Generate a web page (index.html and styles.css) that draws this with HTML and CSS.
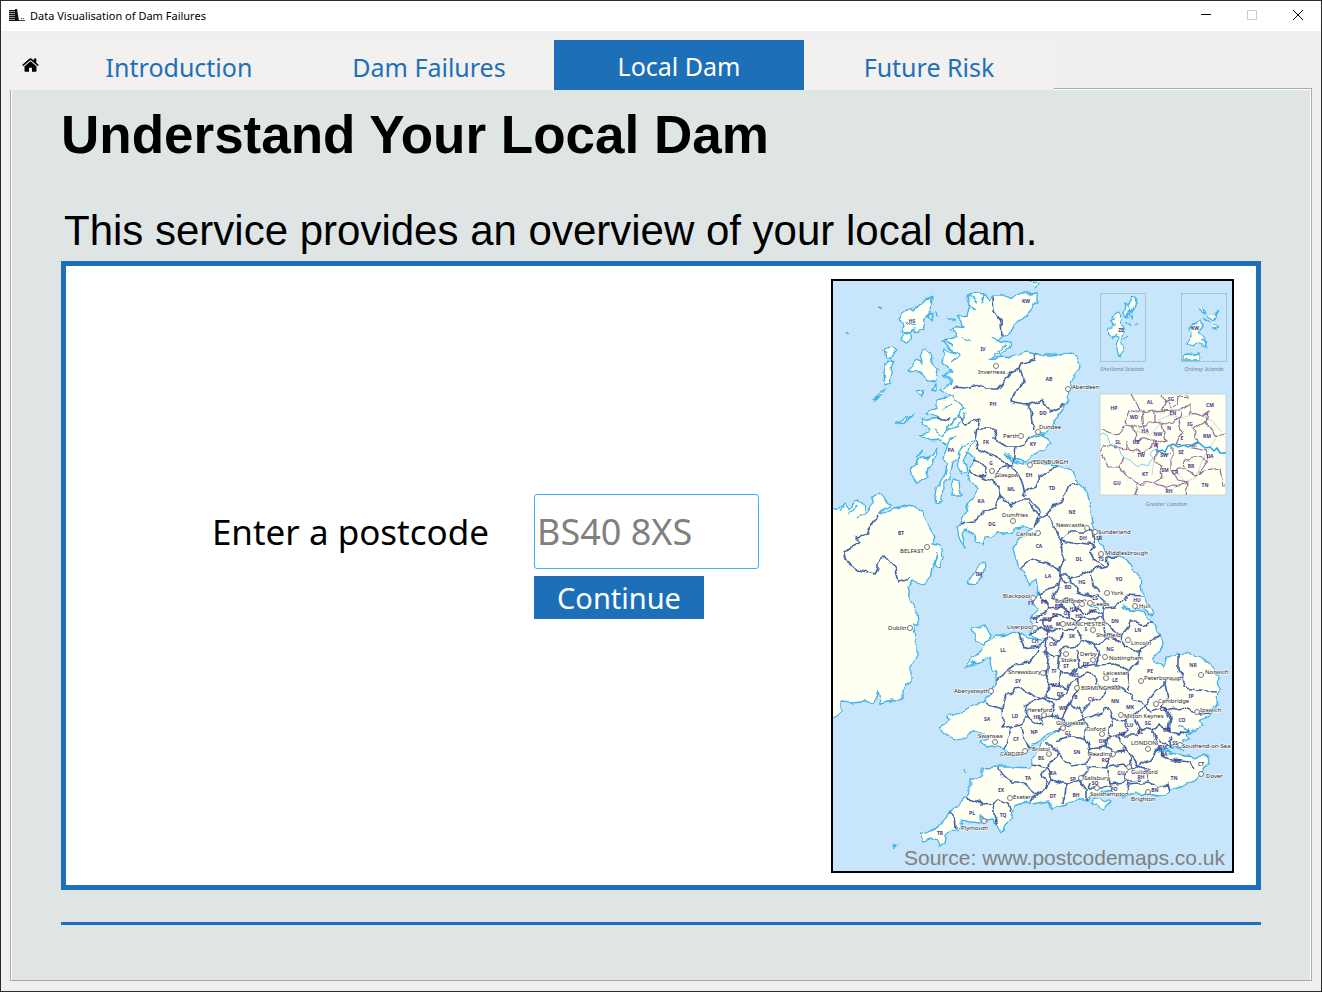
FILE: index.html
```
<!DOCTYPE html>
<html lang="en">
<head>
<meta charset="utf-8">
<title>Data Visualisation of Dam Failures</title>
<link rel="stylesheet" href="styles.css">
</head>
<body>
<div class="window">
  <header class="titlebar">
    <svg class="app-icon" viewBox="0 0 16 13" aria-hidden="true">
      <path fill="#999" d="M0 1h6v11H0z"/>
      <path stroke="#111" stroke-width="1" d="M0 1.500h6M0 3.500h6M0 5.500h6M0 7.500h6M0 9.500h6M0 11.500h6"/>
      <path fill="#111" d="M6 0h2l2 12H6z"/>
      <path stroke="#444" d="M10 11.500h6M12 9.500h1M14 9.500h1"/>
    </svg>
    <span class="app-name">Data Visualisation of Dam Failures</span>
    <div class="window-controls">
      <button type="button" aria-label="Minimise"><svg viewBox="0 0 10 10"><path d="M0 4.500h10" stroke="#000"/></svg></button>
      <button type="button" aria-label="Maximise" disabled><svg viewBox="0 0 10 10"><path d="M.5.500h9v9h-9z" fill="none" stroke="#ccc"/></svg></button>
      <button type="button" aria-label="Close"><svg viewBox="0 0 10 10"><path d="M0 0l10 10M10 0L0 10" stroke="#000"/></svg></button>
    </div>
  </header>

  <div class="workspace">
    <nav class="tabs">
      <a class="tab tab-home" href="#home" aria-label="Home">
        <svg viewBox="0 0 17 14"><path d="M8.500 3.200L2.500 8.200V13q0 .7.700.7H7V9.800h3v3.900h3.800q.7 0 .7-.7V8.200z"/><path d="M8.500.300q-.5 0-.9.300L.4 6.700q-.3.300 0 .5l.5.600q.3.200.6 0L8.500 2.100l7 5.700q.3.200.6 0l.5-.6q.3-.2 0-.5L14.300 4.700V.700q0-.3-.3-.3h-1.900q-.3 0-.3.300v1.800L9.400.600Q9 .300 8.500.300z"/></svg>
      </a>
      <a class="tab" href="#introduction">Introduction</a>
      <a class="tab" href="#failures">Dam Failures</a>
      <a class="tab tab-active" href="#local" aria-current="page">Local Dam</a>
      <a class="tab" href="#risk">Future Risk</a>
    </nav>

    <main class="panel">
      <h1 class="title">Understand Your Local Dam</h1>
      <p class="lead">This service provides an overview of your local dam.</p>

      <section class="card">
        <form class="search">
          <label class="search-label" for="postcode">Enter a postcode</label>
          <input class="search-input" id="postcode" type="text" placeholder="BS40 8XS">
          <button class="search-button" type="button">Continue</button>
        </form>

        <figure class="map">
          <svg class="map-drawing" viewBox="833 281 399 590" preserveAspectRatio="xMidYMid slice" role="img" aria-label="UK postcode areas">
            <defs>
              <filter id="rough" x="0" y="0" width="1" height="1" color-interpolation-filters="sRGB">
                <feTurbulence type="fractalNoise" baseFrequency="0.13" numOctaves="1" seed="4" result="n"/>
                <feDisplacementMap in="SourceGraphic" in2="n" scale="8" xChannelSelector="R" yChannelSelector="G"/>
              </filter>
            </defs>
            <g filter="url(#rough)">
              <rect class="sea" x="813" y="261" width="439" height="630"/>
              <g class="land">
                <path d="M972 292L978 293 984 294 988 300 993 297 1005 297 1013 297 1020 293 1030 293 1037 292V300L1033 309 1028 314 1018 321 1010 330 1002 337 998 341 992 337 1000 342 1011 343 1007 350 995 355 990 359 1004 357 1010 358 1017 355 1025 352 1037 354 1050 354 1063 355 1070 353 1077 357 1080 364 1079 370 1073 379 1069 390 1068 400 1064 408 1058 416 1054 422 1050 430 1045 434 1036 434 1030 438 1043 435 1047 439 1051 444 1045 449 1037 452 1030 457 1024 461 1014 459 1005 453 1012 461 1022 464 1035 462 1045 464 1058 465 1068 468 1075 477 1080 483 1085 488 1088 500 1090 512 1093 525 1097 533 1102 545 1104 552 1108 557 1118 556 1127 560 1133 568 1140 577 1144 581 1141 586 1143 595 1148 605 1153 615 1148 613 1142 608 1133 610 1122 607 1136 612 1145 614 1152 622 1158 630 1162 638 1163 645 1158 652 1152 660 1158 663 1164 667 1168 657 1177 654 1190 654 1203 658 1213 668 1219 678 1218 688 1217 702 1213 712 1207 717 1200 720 1203 727 1193 730 1187 734 1190 739 1182 740 1180 745 1173 749 1155 750 1170 753 1180 755 1193 757 1210 755 1208 765 1202 772 1195 780 1187 785 1177 787 1168 793 1160 796 1143 793 1130 794 1122 798 1112 792 1103 791 1095 795 1087 800 1077 800 1070 804 1062 806 1053 809 1048 801 1040 803 1030 802 1020 803 1013 808 1012 818 1005 825 1002 832 997 828 993 820 986 821 982 816 982 823 970 822 963 820 958 828 947 833 945 842 940 846 937 840 930 838 923 840 920 835 927 832 937 828 945 820 950 812 957 805 965 798 970 790V780L977 780 983 775V768L997 767 1013 767 1030 768 1033 758 1037 752 1043 742 1057 730 1044 736 1035 745 1030 748 1023 755 1013 756 1003 750 997 745 987 747 982 742 989 738 980 732 970 732 965 738 955 741 950 736 942 732 940 727 948 722 947 717 960 713 970 707 983 702 992 693 995 682 997 672 992 672 990 662 992 657 980 662 972 663 965 668 970 660 980 652 983 645 995 637 1007 635 1020 632 1028 638 1040 641 1032 634 1031 627 1032 617 1037 610 1033 602 1038 592 1036 578 1030 585 1025 575 1020 567 1015 557 1013 548 1022 537 1033 528 1024 527 1015 528 1013 533 997 533 990 538 985 537 983 545 975 538 967 530 962 533 965 547 960 540 956 527 962 522 967 508 973 498 977 490 968 475 974 458 968 452 964 460 967 472 962 475 958 467 957 458 953 462 950 475 943 485 942 500 935 502 937 488 945 475 947 465 943 458 948 445 940 439 928 440 918 435 930 430 927 428 920 420 940 417 925 412 937 407V400L952 397 940 390 953 382 945 375 953 370 942 363 945 350 955 354 943 340 958 337 952 328 963 325 957 317 967 315 970 305 968 297Z"/>
                <path d="M828 510L838 509 845 503 850 509 857 500 863 505 865 512 870 507 872 497 880 495 892 505 885 508 879 515 894 508 907 506 917 507 923 512 928 525 935 537 932 543 942 545 944 557 940 568 935 565 937 553 932 568 930 578 923 585 914 582 908 588 912 602 917 612 918 625 913 625 917 640V655L910 668V680L903 690V700L893 700 880 703 878 690 875 702 863 702 850 703 842 702V712L832 720H820V510Z"/>
                <path d="M931 297L924 301 912 311 906 311 899 318 903 325 901 332 910 334 914 330 916 333 923 329 925 321 930 314ZM904 334L911 336 907 343 901 340ZM884 350L893 347 898 351 892 356 886 356ZM887 360L894 362 890 372 891 383 885 385 884 372ZM886 388L878 397 874 402 880 391Z"/>
                <path d="M924 349L930 352 931 362 938 370 936 380 928 382 921 372 909 370 915 360 922 362 920 355ZM917 391L923 390 922 396ZM897 424L914 413 905 423ZM936 383L931 390 936 391ZM929 315L933 313 931 319Z"/>
                <path d="M911 468L920 458 928 460 938 448 935 458 929 468 927 478 917 484 913 476ZM918 456L924 449 920 452ZM952 478L959 480 960 494 953 494 950 487ZM984 562L985 571 975 585 968 584 973 573ZM972 629L985 625 991 636 984 645 976 642ZM1090 802L1099 797 1110 802 1103 809ZM893 845L898 844 894 848Z"/>
                <path d="M846 332L849 334M879 308L883 309M965 768L966 771M1030 281L1040 283 1035 288"/>
              </g>
              <g class="inlet">
                <path d="M954 351L960 355 951 362M945 340L953 346M970 305L977 310M968 297L977 301M984 294L982 304M952 397L965 407 955 418 947 430M955 420L943 435 935 430M965 413L958 426 945 432M945 445L955 436M1004 357L997 351 1007 345M957 458L963 445 971 441M1087 605L1098 608M974 441L970 450M858 507L848 515M865 512L857 518M845 503L840 511M1172 745L1183 751M1190 732L1180 727M918 435L926 434M943 375L952 384M936 310L937 318M890 356L893 364M905 322L915 326M948 318L956 322M962 337L970 341M943 410L950 404"/>
              </g>
              <g class="border">
                <path d="M993 298L994 312 1001 322 1002 336M954 387L965 388 980 385 985 389 997 389 1003 382 1012 372 1020 368 1022 363 1035 360 1037 354M1020 368L1023 378 1022 385 1011 397 1010 402 1025 405 1043 400 1050 412 1065 405M1027 403L1031 412 1032 422 1035 430M937 418L948 420M958 416L965 424 980 420 977 428 997 428 993 438 1007 447 1017 447 1025 445 1030 435"/>
                <path d="M977 428L975 440 978 448 988 453 1000 458 1008 468 1013 465 1015 447M969 470L975 475 985 476 987 468 980 462 972 460M975 475L990 480 997 485 1000 495M995 480L1000 468 1010 466 1018 475 1023 485 1025 497M1025 492L1035 487 1040 475 1050 470 1058 465M961 524L975 522 985 512 995 508 1000 495 1012 506 1020 500 1030 500 1040 510 1038 520 1034 525"/>
                <path d="M1078 484L1068 487 1063 500 1052 507 1047 515 1042 518 1035 510 1028 502M1042 518L1034 526M1047 515L1053 525 1060 540 1068 532 1085 532 1092 530 1095 545 1080 543 1061 540 1062 552 1065 560 1060 568 1060 575 1075 578 1085 573 1098 568 1106 566 1107 558 1118 556M1095 545L1090 550 1093 560 1106 566M1020 568L1030 559 1045 562 1060 570"/>
                <path d="M1060 575L1058 585 1038 593M1060 575L1063 581 1073 583 1078 592 1090 596 1098 594 1104 600 1103 608 1115 607 1118 603 1125 600 1128 595 1142 596M1072 578L1073 583M1090 574L1093 585 1100 592M1103 608L1103 620 1110 628 1120 636 1128 630 1130 620 1145 625 1153 622M1162 636L1150 640 1145 647 1138 652 1125 648 1120 636M1140 650L1138 662 1127 672 1129 690"/>
                <path d="M1038 593L1045 600 1050 608 1045 614 1032 618M1058 585L1052 598 1060 602 1072 598 1078 603 1085 600M1050 608L1062 606 1070 612 1068 618 1058 614 1050 620 1040 620M1070 612L1078 608 1082 614 1092 612 1103 612M1068 618L1076 622 1085 618 1095 620 1103 616M1042 620L1044 628 1052 631 1062 628 1072 630 1078 622M1030 634L1040 628 1050 632 1048 640 1040 638M1060 600L1062 608M1073 600L1077 612"/>
                <path d="M1020 632L1024 648 1040 646 1046 638 1060 640 1064 632M1046 638L1045 650 1053 658 1060 656 1062 648 1078 646 1082 640 1078 630M1082 640L1095 645 1110 637 1120 640M1095 645L1100 655 1096 665 1080 668 1078 650M1060 656L1058 670 1070 675 1078 668M1096 665L1115 664 1128 670M1104 628L1106 638M995 682L1005 672 1016 664 1030 662 1040 648"/>
                <path d="M1045 650L1048 660 1046 675 1050 684 1060 686 1068 690 1070 682 1080 678 1085 672 1095 674 1096 684 1106 690 1115 686 1128 692 1133 700 1145 705 1155 692 1165 684 1167 678 1180 680M1178 654L1178 670 1185 680 1184 688 1200 690 1216 692M1050 684L1046 696 1056 700 1064 696 1068 690M1060 670L1058 686M1080 678L1078 690 1070 702 1080 712 1090 702 1100 700 1106 690M1165 684L1168 698 1160 706 1170 710 1182 708 1200 714 1210 713"/>
                <path d="M985 702L992 706 1003 709 1006 694 1022 688 1034 696 1044 698 1030 702 1024 706 1028 718 1040 725M1003 709L1004 720 1000 728 1012 726 1010 735 1004 750M1012 726L1022 724 1028 718M1022 726L1024 740 1030 748M1044 698L1054 704 1052 716 1040 718 1042 726M1052 716L1062 718 1070 702M1062 718L1066 726 1084 720 1102 714 1106 706M1066 726L1056 732M1080 712L1086 724 1084 740"/>
                <path d="M1106 706L1112 720 1108 734 1120 736 1128 728 1124 720 1134 716 1145 705 1150 712 1164 708M1124 720L1110 718M1134 716L1140 728 1136 736 1120 736M1140 728L1152 730 1158 724 1168 730 1170 718 1166 710M1168 730L1180 736 1188 730M1152 730L1158 748 1150 760 1132 768 1128 752 1122 742 1116 736M1158 748L1164 756 1172 760 1190 762 1194 768M1158 740L1166 742 1172 750M1170 736L1172 748"/>
                <path d="M1056 740L1070 736 1086 740 1090 748 1088 764 1070 766 1058 752 1050 744 1045 744M1090 748L1106 746 1108 736M1106 746L1112 754 1124 752M1112 754L1106 768 1088 766M1106 768L1124 764 1128 770 1124 782 1110 784 1108 770M1058 752L1048 768 1032 764M1048 768L1052 780 1066 784 1080 780 1090 768M1128 752L1138 766 1148 770 1150 782 1128 784 1126 794M1150 782L1158 788 1168 784 1170 792"/>
                <path d="M998 768L1000 774 1012 782 1022 782 1036 794 1048 786 1042 774 1048 768M1036 794L1030 801M1052 780L1048 788M1066 784L1062 804M1080 780L1086 790 1086 800M1090 782L1088 788 1104 788 1112 786M1124 782L1140 780M965 799L974 800 982 804 994 803 998 800 1008 804 1011 810M994 803L996 824M950 812L954 816 955 828"/>
                <path d="M878 515L872 525 865 535 855 537 860 542 843 551 848 563 862 572 875 575 880 562 885 557 895 568 898 582 912 579"/>
              </g>
            </g>

            <g class="inset-sea">
              <rect x="1100.500" y="293.500" width="45" height="68"/>
              <rect x="1181.500" y="293.500" width="45" height="68"/>
            </g>
            <g class="land island" filter="url(#rough)">
              <path d="M1133 296L1137 298 1134 307 1130 312 1128 306ZM1126 304L1129 308 1127 317 1123 314ZM1117 311L1121 318 1119 325 1125 328 1121 335 1123 346 1120 358 1117 350 1118 337 1108 334 1107 329 1114 326 1112 317ZM1129 314L1134 308 1132 318ZM1136 324L1138 323M1125 322L1132 327M1110 320L1115 318M1113 338L1117 333M1124 340L1128 335"/>
              <path d="M1192 324L1200 320 1204 325 1198 333 1204 338 1206 346 1200 343 1194 347 1188 342 1191 333 1188 328ZM1182 356L1199 353 1199 361 1182 361ZM1199 309L1205 313 1203 308M1207 316L1213 320 1221 309 1215 315M1214 325L1218 328 1213 330M1204 317L1211 323M1202 340L1208 344"/>
            </g>

            <g class="london">
              <rect x="1100" y="394" width="126" height="101"/>
              <path class="london-road" d="M1158 420L1170 415 1182 418 1196 413 1212 421 1222 432M1160 424L1150 435 1132 430M1216 438L1205 455 1195 478 1185 482 1176 470M1152 475L1154 460 1160 450"/>
              <path class="london-border" filter="url(#rough)" d="M1132 394L1138 405 1140 413 1162 410 1165 400 1173 408 1180 397 1190 396M1165 400L1163 394M1140 413L1128 410 1124 420 1128 425 1118 435 1108 432 1100 429M1128 425L1140 428 1155 422 1155 411 1180 410 1190 404 1190 413 1204 416 1208 413 1206 422 1216 436 1226 434M1155 422L1165 424 1178 420 1180 412M1178 420L1182 432 1176 444 1190 446 1198 444 1194 430 1206 422M1132 425L1136 440 1150 438 1155 443 1166 440 1162 424M1128 440L1128 450 1142 452 1155 443M1128 450L1110 445 1100 450M1155 443L1160 452 1172 455 1172 444M1172 455L1172 470 1185 468 1184 459 1200 458 1207 462 1206 450 1190 446M1119 467L1130 480 1136 484 1152 482 1162 478 1160 464 1155 462 1156 452M1172 470L1178 480 1188 482 1186 495M1152 482L1168 488 1188 482M1136 484L1137 495M1207 462L1200 472 1220 468 1223 486 1226 486M1102 453L1108 467 1119 467 1124 458M1185 468L1194 476 1204 472M1142 410L1144 430"/>
              <path class="thames-west" d="M1100 435L1103 433 1107 435 1109 441 1111 446 1115 445 1119 448 1121 454 1125 458 1130 460 1134 464 1138 467 1142 464 1148 466 1150 462 1153 458 1150 454 1153 450 1158 450"/>
              <path class="thames" d="M1156 449L1158 452 1162 450 1165 452 1168 446 1173 444 1178 447 1184 445 1188 447 1194 444 1198 442 1205 448 1210 447 1214 451 1217 448 1220 453 1226 453"/>
            </g>

            <g class="area">
              <text x="912" y="323">HS</text><text x="1026" y="303">KW</text><text x="983" y="351">IV</text><text x="993" y="406">PH</text><text x="1049" y="381">AB</text><text x="1043" y="415">DD</text><text x="951" y="452">PA</text><text x="986" y="444">FK</text><text x="1033" y="446">KY</text><text x="991" y="465">G</text><text x="1029" y="477">EH</text><text x="1011" y="491">ML</text><text x="981" y="503">KA</text><text x="992" y="526">DG</text><text x="1052" y="490">TD</text><text x="1072" y="514">NE</text><text x="1083" y="540">DH</text><text x="1099" y="540">SR</text><text x="1039" y="548">CA</text><text x="1079" y="561">DL</text><text x="1101" y="561">TS</text><text x="901" y="535">BT</text><text x="979" y="576">IM</text>
              <text x="1048" y="578">LA</text><text x="1082" y="584">HG</text><text x="1119" y="581">YO</text><text x="1068" y="589">BD</text><text x="1044" y="604">PR</text><text x="1058" y="608">BB</text><text x="1095" y="600">LS</text><text x="1073" y="611">HX</text><text x="1093" y="613">WF</text><text x="1137" y="602">HU</text><text x="1031" y="605">FY</text><text x="1055" y="617">BL</text><text x="1067" y="615">OL</text><text x="1079" y="618">HD</text><text x="1037" y="623">L</text><text x="1047" y="621">WN</text><text x="1049" y="629">WA</text><text x="1058" y="626">M</text><text x="1086" y="631">S</text><text x="1115" y="623">DN</text><text x="1138" y="632">LN</text><text x="1072" y="638">SK</text><text x="1035" y="643">CH</text><text x="1053" y="646">CW</text><text x="1110" y="651">NG</text><text x="1086" y="666">DE</text><text x="1066" y="668">ST</text><text x="1003" y="652">LL</text><text x="1054" y="673">TF</text><text x="1075" y="677">WS</text><text x="1115" y="682">LE</text><text x="1150" y="673">PE</text><text x="1193" y="667">NR</text><text x="1018" y="683">SY</text><text x="1055" y="687">WV</text><text x="1060" y="696">DY</text><text x="1076" y="699">B</text><text x="1091" y="701">CV</text><text x="1115" y="703">NN</text><text x="1130" y="709">MK</text><text x="1163" y="711">CB</text><text x="1191" y="698">IP</text><text x="1182" y="722">CO</text><text x="987" y="721">SA</text><text x="1015" y="718">LD</text><text x="1037" y="719">HR</text><text x="1063" y="710">WR</text><text x="1034" y="734">NP</text><text x="1068" y="735">GL</text><text x="1016" y="741">CF</text><text x="1130" y="727">LU</text><text x="1148" y="725">SG</text><text x="1122" y="736">HP</text><text x="1140" y="734">AL</text><text x="1167" y="732">CM</text><text x="1102" y="743">OX</text><text x="1077" y="754">SN</text><text x="1041" y="760">BS</text><text x="1105" y="762">RG</text><text x="1125" y="751">SL</text><text x="1175" y="745">SS</text><text x="1163" y="749">RM</text><text x="1164" y="756">DA</text><text x="1177" y="763">ME</text><text x="1201" y="766">CT</text><text x="1053" y="775">BA</text><text x="1028" y="780">TA</text><text x="1001" y="792">EX</text><text x="1073" y="781">SP</text><text x="1121" y="775">GU</text><text x="1141" y="779">RH</text><text x="1174" y="780">TN</text><text x="1095" y="785">SO</text><text x="1114" y="791">PO</text><text x="1155" y="792">BN</text><text x="1053" y="798">DT</text><text x="1076" y="797">BH</text><text x="972" y="815">PL</text><text x="1003" y="817">TQ</text><text x="940" y="835">TR</text><text x="1121" y="332">ZE</text><text x="1195" y="330">KW</text>
              <text x="1114" y="410">HP</text><text x="1150" y="404">AL</text><text x="1171" y="401">SG</text><text x="1210" y="407">CM</text><text x="1134" y="419">WD</text><text x="1173" y="415">EN</text><text x="1190" y="426">IG</text><text x="1145" y="433">HA</text><text x="1158" y="436">NW</text><text x="1169" y="430">N</text><text x="1182" y="440">E</text><text x="1207" y="438">RM</text><text x="1118" y="444">SL</text><text x="1136" y="444">UB</text><text x="1156" y="447">W</text><text x="1141" y="457">TW</text><text x="1164" y="457">SW</text><text x="1181" y="454">SE</text><text x="1210" y="458">DA</text><text x="1191" y="468">BR</text><text x="1165" y="472">SM</text><text x="1175" y="474">CR</text><text x="1145" y="476">KT</text><text x="1117" y="485">GU</text><text x="1205" y="487">TN</text><text x="1169" y="493">RH</text>
            </g>

            <g class="dot">
              <circle cx="996" cy="366" r="2.500"/><circle cx="1068" cy="389" r="2.500"/><circle cx="1038" cy="432" r="2.500"/><circle cx="1021" cy="436" r="2.500"/><circle cx="1030" cy="465" r="2.500"/><circle cx="992" cy="471" r="2.500"/><circle cx="1013" cy="521" r="2.500"/><circle cx="1038" cy="533" r="2.500"/><circle cx="927" cy="547" r="2.500"/><circle cx="1087" cy="528" r="2.500"/><circle cx="1095" cy="532" r="2.500"/><circle cx="1101" cy="554" r="2.500"/><circle cx="910" cy="628" r="2.500"/><circle cx="1033" cy="598" r="2.500"/><circle cx="1035" cy="628" r="2.500"/><circle cx="1107" cy="593" r="2.500"/><circle cx="1082" cy="604" r="2.500"/><circle cx="1090" cy="603" r="2.500"/><circle cx="1135" cy="606" r="2.500"/><circle cx="1063" cy="624" r="2.500"/><circle cx="1093" cy="630" r="2.500"/><circle cx="1128" cy="640" r="2.500"/><circle cx="1066" cy="654" r="2.500"/><circle cx="1093" cy="660" r="2.500"/><circle cx="1105" cy="657" r="2.500"/><circle cx="1106" cy="678" r="2.500"/><circle cx="1043" cy="673" r="2.500"/><circle cx="1141" cy="681" r="2.500"/><circle cx="1201" cy="675" r="2.500"/><circle cx="1077" cy="688" r="2.500"/><circle cx="991" cy="691" r="2.500"/><circle cx="1156" cy="704" r="2.500"/><circle cx="1197" cy="712" r="2.500"/><circle cx="1121" cy="715" r="2.500"/><circle cx="1044" cy="715" r="2.500"/><circle cx="1063" cy="728" r="2.500"/><circle cx="1102" cy="734" r="2.500"/><circle cx="995" cy="742" r="2.500"/><circle cx="1025" cy="751" r="2.500"/><circle cx="1049" cy="754" r="2.500"/><circle cx="1113" cy="754" r="2.500"/><circle cx="1148" cy="749" r="2.500"/><circle cx="1180" cy="745" r="2.500"/><circle cx="1129" cy="767" r="2.500"/><circle cx="1201" cy="774" r="2.500"/><circle cx="1081" cy="778" r="2.500"/><circle cx="1097" cy="788" r="2.500"/><circle cx="1148" cy="792" r="2.500"/><circle cx="1010" cy="798" r="2.500"/><circle cx="984" cy="821" r="2.500"/>
            </g>

            <g class="city">
              <text x="978" y="374">Inverness</text><text x="1072" y="389">Aberdeen</text><text x="1039" y="429">Dundee</text><text x="1003" y="438">Perth</text><text x="1033" y="464">EDINBURGH</text><text x="995" y="477">Glasgow</text><text x="1002" y="517">Dumfries</text><text x="1016" y="536">Carlisle</text><text x="900" y="553">BELFAST</text><text x="1056" y="527">Newcastle</text><text x="1098" y="534">Sunderland</text><text x="1105" y="555">Middlesbrough</text><text x="888" y="630">Dublin</text><text x="1003" y="598">Blackpool</text><text x="1007" y="629">Liverpool</text><text x="1111" y="595">York</text><text x="1055" y="603">Bradford</text><text x="1093" y="606">Leeds</text><text x="1139" y="608">Hull</text><text x="1066" y="626">MANCHESTER</text><text x="1096" y="637">Sheffield</text><text x="1131" y="645">Lincoln</text><text x="1061" y="662">Stoke</text><text x="1080" y="656">Derby</text><text x="1109" y="660">Nottingham</text><text x="1103" y="675">Leicester</text><text x="1008" y="674">Shrewsbury</text><text x="1144" y="680">Peterborough</text><text x="1205" y="674">Norwich</text><text x="1081" y="690">BIRMINGHAM</text><text x="954" y="693">Aberystwyth</text><text x="1158" y="703">Cambridge</text><text x="1200" y="712">Ipswich</text><text x="1124" y="718">Milton Keynes</text><text x="1027" y="712">Hereford</text><text x="1056" y="725">Gloucester</text><text x="1086" y="731">Oxford</text><text x="978" y="738">Swansea</text><text x="1000" y="756">CARDIFF</text><text x="1032" y="751">Bristol</text><text x="1089" y="756">Reading</text><text x="1131" y="745">LONDON</text><text x="1182" y="748">Southend-on-Sea</text><text x="1131" y="774">Guildford</text><text x="1206" y="778">Dover</text><text x="1084" y="780">Salisbury</text><text x="1090" y="796">Southampton</text><text x="1131" y="801">Brighton</text><text x="1013" y="799">Exeter</text><text x="961" y="830">Plymouth</text>
            </g>
            <g class="inset-name">
              <text x="1122" y="371">Shetland Islands</text><text x="1204" y="371">Orkney Islands</text><text x="1166" y="506">Greater London</text>
            </g>
          </svg>
          <figcaption class="map-source">Source: www.postcodemaps.co.uk</figcaption>
        </figure>
      </section>
      <hr class="rule">
    </main>
  </div>
</div>
</body>
</html>
```
FILE: styles.css
```
* { box-sizing: border-box; }

body {
  margin: 0;
  font-family: "Noto Sans", "Open Sans", sans-serif;
  color: #000;
}

.window {
  display: flex;
  flex-direction: column;
  min-height: 100vh;
  border: 1px solid #2b2b2b;
  background: #efefef;
}

.titlebar {
  display: flex;
  align-items: center;
  height: 30px;
  padding: 0 0 2px 8px;
  background: #fff;
}

.app-icon { width: 16px; height: 13px; }

.app-name {
  flex: 1;
  margin-left: 5px;
  font-size: 11px;
}

.window-controls { display: flex; }

.window-controls button {
  display: flex;
  align-items: center;
  justify-content: center;
  width: 46px;
  height: 28px;
  padding: 0;
  border: 0;
  background: none;
}

.window-controls svg { width: 10px; height: 10px; }

.workspace {
  display: flex;
  flex: 1;
  flex-direction: column;
  padding: 9px 9px 10px;
}

.tabs {
  position: relative;
  z-index: 1;
  display: flex;
  align-self: flex-start;
  margin-bottom: -2px;
}

.tab {
  display: flex;
  align-items: center;
  justify-content: center;
  width: 250px;
  height: 50px;
  padding-top: 3px;
  background: #f2f1ef;
  color: #1d70b8;
  font-size: 25px;
  text-decoration: none;
}

.tab-home { width: 44px; padding: 0 4px 0 0; }
.tab-home svg { width: 17px; height: 14px; fill: #000; }

.tab-active { padding-top: 2px; background: #1d70b8; color: #fff; }

.panel {
  flex: 1;
  padding: 0 50px 24px;
  border: 1px solid #aaa;
  box-shadow: inset 1px 1px #fff, inset -1px 0 #fff;
  background: #dfe5e4;
}

.title {
  margin: 0;
  padding-top: 14px;
  font-family: "Liberation Sans", Arial, sans-serif;
  font-size: 53px;
  line-height: 64px;
}

.lead {
  margin: 0;
  padding: 40px 3px 6px;
  font-family: "Liberation Sans", Arial, sans-serif;
  font-size: 42px;
  line-height: 48px;
}

.card {
  display: flex;
  align-items: center;
  border: 5px solid #1d70b8;
  padding: 13px 22px 12px 0;
  background: #fff;
}

.search {
  display: grid;
  flex: 1;
  grid-template-columns: auto 225px;
  justify-content: end;
  align-items: center;
  gap: 7px 45px;
  padding: 0 72px 40px 0;
}

.search-label { font-size: 35px; white-space: nowrap; }

.search-input {
  width: 100%;
  height: 75px;
  padding: 0 2px;
  border: 1px solid #3daefa;
  border-radius: 3px;
  outline: 0;
  font-family: inherit;
  font-size: 36px;
}

.search-input::placeholder { color: #808080; opacity: 1; }

.search-button {
  grid-column: 2;
  justify-self: start;
  width: 170px;
  height: 43px;
  padding: 0;
  border: 0;
  background: #1d70b8;
  color: #fff;
  font-family: inherit;
  font-size: 29px;
  line-height: 43px;
}

.map {
  position: relative;
  width: 403px;
  margin: 0;
  border: 2px solid #000;
}

.map-drawing { display: block; width: 100%; height: auto; background: #c8e6fb; }

.map-source {
  position: absolute;
  right: 7px;
  bottom: 1px;
  color: #808080;
  font-family: "Liberation Sans", Arial, sans-serif;
  font-size: 21px;
  line-height: 24px;
  white-space: nowrap;
}

.rule { height: 3px; margin: 32px 0 0; border: 0; background: #1d70b8; }

.sea { fill: #c8e6fb; }
.land { fill: #fffff2; stroke: #3fb2ea; stroke-width: 1.3; stroke-linejoin: round; }
.inlet { fill: none; stroke: #3fb2ea; stroke-width: 1.3; }
.border { fill: none; stroke: #4462a8; stroke-width: 1.6; stroke-linejoin: round; }
.inset-sea { fill: #c8e6fb; stroke: #a5c4d8; }
.london { fill: none; }
.london rect { fill: #fffff2; stroke: #c9d3d3; }
.london-border { stroke: #8f7096; stroke-width: 1.2; }
.london-road { stroke: #cfd6d3; }
.thames { stroke: #1fa5ee; stroke-width: 1.5; }
.thames-west { stroke: #7dcdf2; }
.area { fill: #45398a; font-size: 5px; font-weight: 700; text-anchor: middle; }
.dot { fill: #fff; stroke: #777; stroke-width: 1; }
.city { fill: #222; stroke: #fff; stroke-width: 1; paint-order: stroke; font-size: 6px; }
.inset-name { fill: #7b8790; font-size: 6px; font-style: italic; text-anchor: middle; }
```
